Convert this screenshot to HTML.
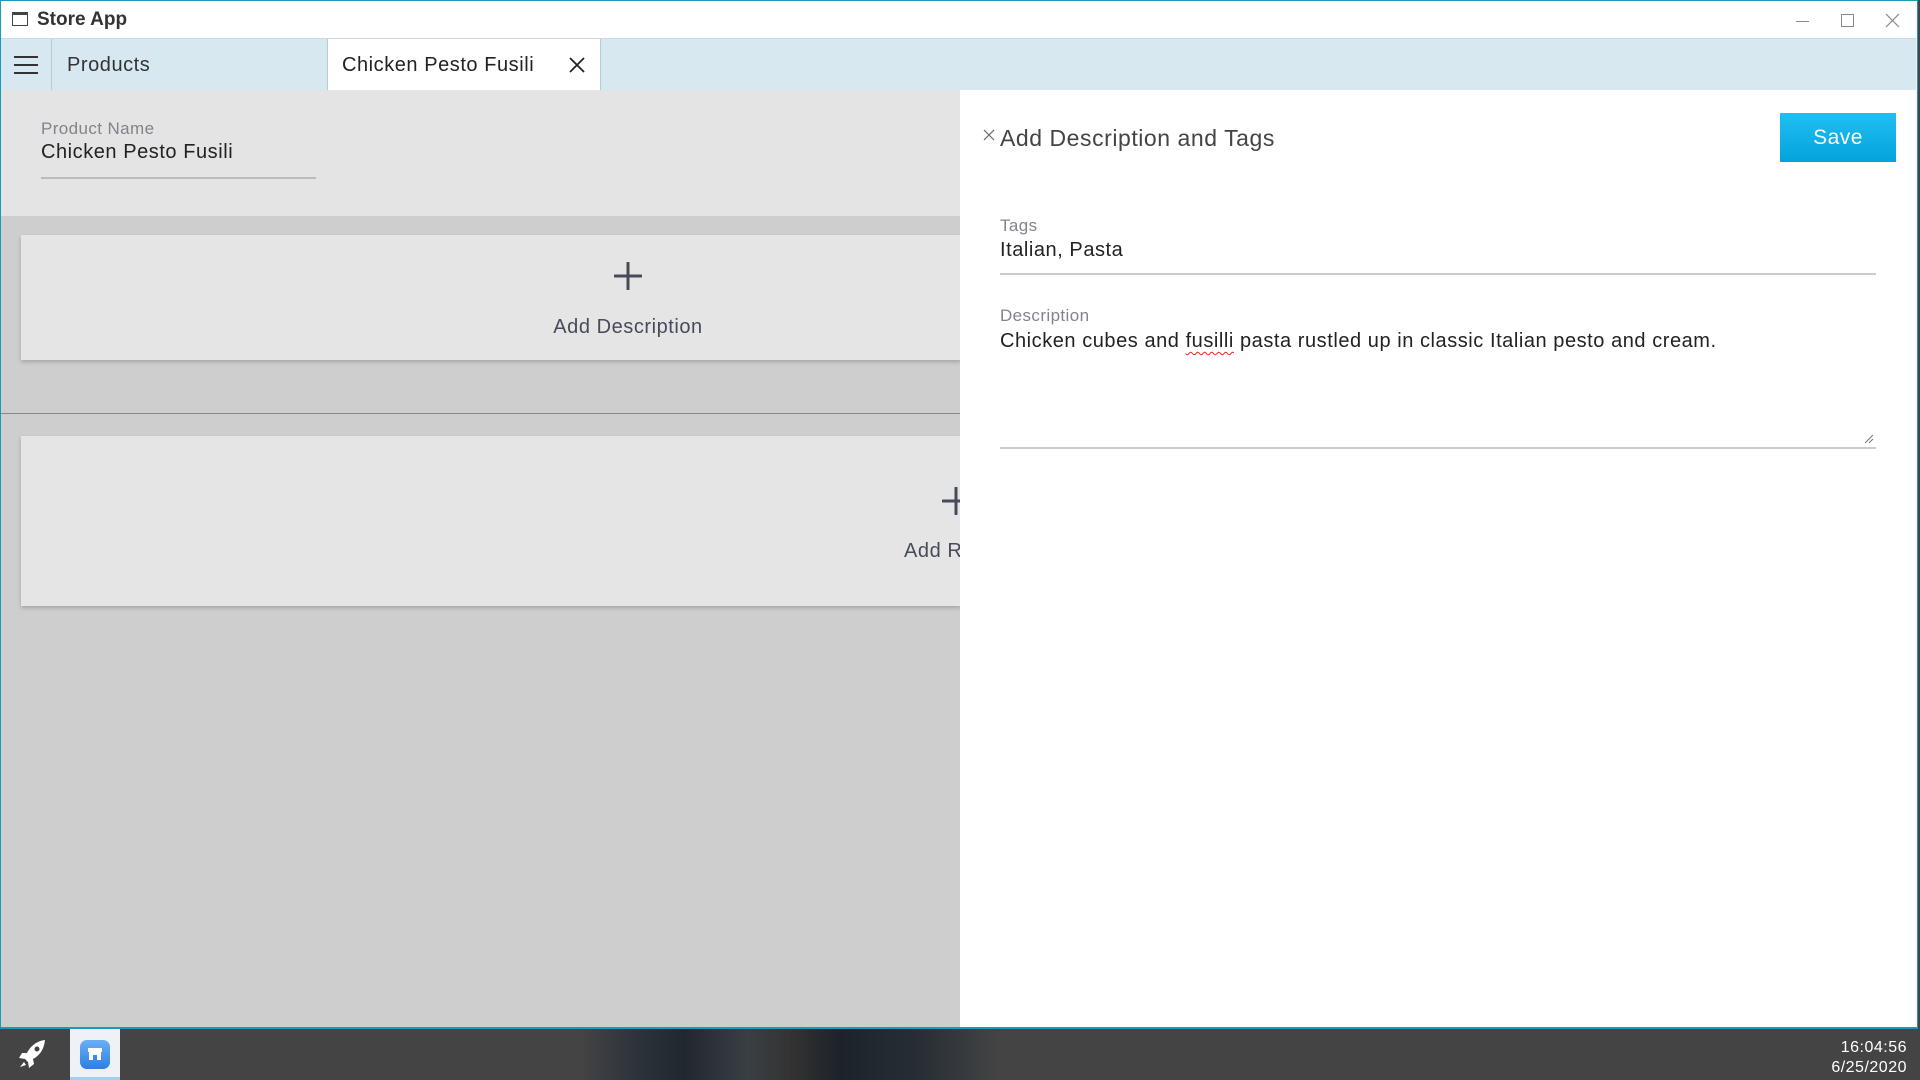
<!DOCTYPE html>
<html><head><meta charset="utf-8"><style>
*{margin:0;padding:0;box-sizing:border-box}
body{width:1920px;height:1080px;overflow:hidden;font-family:"Liberation Sans",sans-serif;background:#444;position:relative}
.abs{position:absolute}
.t20{font-size:20px;letter-spacing:0.55px}
.t17{font-size:17px;letter-spacing:0.4px}
</style></head><body>
<div class="abs" style="left:0;top:0;width:1918px;height:1029px;background:#fff;border:1px solid #1a9bb5;border-bottom:2px solid #1a9bb5"></div>
<div class="abs" style="left:12px;top:12px;width:16px;height:14px;border:1.5px solid #444;border-top-width:3px"></div>
<div class="abs" style="left:37px;top:9px;font-size:19px;color:#333;font-weight:bold;letter-spacing:0px">Store App</div>
<div class="abs" style="left:1796px;top:21px;width:13px;height:1px;background:#888"></div>
<div class="abs" style="left:1841px;top:14px;width:13px;height:13px;border:1px solid #888"></div>
<svg class="abs" style="left:1885px;top:13px" width="15" height="15"><path d="M1 1L14 14M14 1L1 14" stroke="#888" stroke-width="1.2"/></svg>
<div class="abs" style="left:1px;top:38px;width:1916px;height:1px;background:#d0d8de"></div>
<div class="abs" style="left:1px;top:39px;width:1915px;height:51px;background:#d7e8f1"></div>
<div class="abs" style="left:51px;top:39px;width:1px;height:51px;background:#b8ccd8"></div>
<div class="abs" style="left:14px;top:56px;width:24px;height:2px;background:#333;box-shadow:0 8px 0 #333,0 16px 0 #333"></div>
<div class="abs t20" style="left:67px;top:54px;color:#333">Products</div>
<div class="abs" style="left:327px;top:39px;width:274px;height:51px;background:#fff;border-left:1px solid #b8ccd8;border-right:1px solid #b8ccd8"></div>
<div class="abs t20" style="left:342px;top:54px;color:#222">Chicken Pesto Fusili</div>
<svg class="abs" style="left:569px;top:57px" width="16" height="16"><path d="M1 1L15 15M15 1L1 15" stroke="#222" stroke-width="1.8"/></svg>
<div class="abs" style="left:1px;top:90px;width:960px;height:126px;background:#e4e4e4"></div>
<div class="abs" style="left:1px;top:216px;width:960px;height:811px;background:#cecece"></div>
<div class="abs t17" style="left:41px;top:119px;color:#80848e">Product Name</div>
<div class="abs t20" style="left:41px;top:141px;color:#222">Chicken Pesto Fusili</div>
<div class="abs" style="left:41px;top:177px;width:275px;height:2px;background:#bbb"></div>
<div class="abs" style="left:21px;top:235px;width:940px;height:125px;background:#e5e5e5;box-shadow:0 2px 4px rgba(0,0,0,.2)"></div>
<svg class="abs" style="left:614px;top:262px" width="28" height="28"><path d="M14 1V27M1 14H27" stroke="#474a5a" stroke-width="3" stroke-linecap="round"/></svg>
<div class="abs t20" style="left:508px;top:316px;width:240px;text-align:center;color:#474a5a">Add Description</div>
<div class="abs" style="left:1px;top:413px;width:960px;height:1px;background:#888"></div>
<div class="abs" style="left:21px;top:436px;width:940px;height:170px;background:#e5e5e5;box-shadow:0 2px 4px rgba(0,0,0,.2)"></div>
<svg class="abs" style="left:942px;top:487px" width="28" height="28"><path d="M14 1V27M1 14H27" stroke="#474a5a" stroke-width="3" stroke-linecap="round"/></svg>
<div class="abs t20" style="left:904px;top:540px;color:#474a5a">Add Re</div>
<div class="abs" style="left:960px;top:90px;width:956px;height:937px;background:#fff"></div>
<svg class="abs" style="left:983px;top:129px" width="12" height="12"><path d="M1 1L11 11M11 1L1 11" stroke="#666" stroke-width="1.2"/></svg>
<div class="abs" style="left:1000px;top:125px;font-size:23px;letter-spacing:0.55px;color:#444">Add Description and Tags</div>
<div class="abs" style="left:1780px;top:113px;width:116px;height:49px;background:linear-gradient(#21bff2,#02a3dc);color:#fff;font-size:21px;letter-spacing:0.5px;text-align:center;line-height:50px">Save</div>
<div class="abs t17" style="left:1000px;top:216px;color:#80848e">Tags</div>
<div class="abs t20" style="left:1000px;top:239px;color:#222">Italian, Pasta</div>
<div class="abs" style="left:1000px;top:273px;width:876px;height:2px;background:#ccc"></div>
<div class="abs t17" style="left:1000px;top:306px;color:#80848e">Description</div>
<div class="abs t20" style="left:1000px;top:330px;color:#222">Chicken cubes and <span style="text-decoration:underline wavy #e22;text-decoration-thickness:1px;text-underline-offset:4px">fusilli</span> pasta rustled up in classic Italian pesto and cream.</div>
<svg class="abs" style="left:1864px;top:434px" width="10" height="10"><path d="M1 9L9 1M5 9L9 5" stroke="#777" stroke-width="1"/></svg>
<div class="abs" style="left:1000px;top:447px;width:876px;height:2px;background:#ccc"></div>
<div class="abs" style="left:0;top:1029px;width:1920px;height:51px;background:#444"></div>
<div class="abs" style="left:580px;top:1029px;width:420px;height:51px;background:linear-gradient(90deg,#444 0%,#2e353c 12%,#20272e 25%,#3a3f44 40%,#333 50%,#1c232a 62%,#262d34 80%,#444 100%)"></div>
<svg class="abs" style="left:17px;top:1038px" width="30" height="32"><path d="M28 2C19 3 13 9 10 15L5 15 2 20 8 21 11 24 12 30 17 26 16 21C22 18 27 12 28 2Z" fill="#fff"/><circle cx="20" cy="11" r="2.5" fill="#444"/><path d="M7 24L3 29 9 27Z" fill="#fff"/></svg>
<div class="abs" style="left:70px;top:1029px;width:50px;height:51px;background:#eef2f7;border-bottom:3px solid #9fd0f5"></div>
<div class="abs" style="left:80px;top:1040px;width:30px;height:29px;background:linear-gradient(#6ab0f5,#2f7fe0);border-radius:7px"></div>
<div class="abs" style="left:88px;top:1048px;width:14px;height:4px;background:#fff"></div>
<div class="abs" style="left:89px;top:1052px;width:12px;height:8px;background:#fff"></div>
<div class="abs" style="left:93px;top:1055px;width:4px;height:5px;background:#3c88e4"></div>
<div class="abs" style="left:1760px;top:1038px;width:147px;text-align:right;font-size:16px;letter-spacing:0.5px;color:#fff;line-height:20px">16:04:56<br>6/25/2020</div>
</body></html>
